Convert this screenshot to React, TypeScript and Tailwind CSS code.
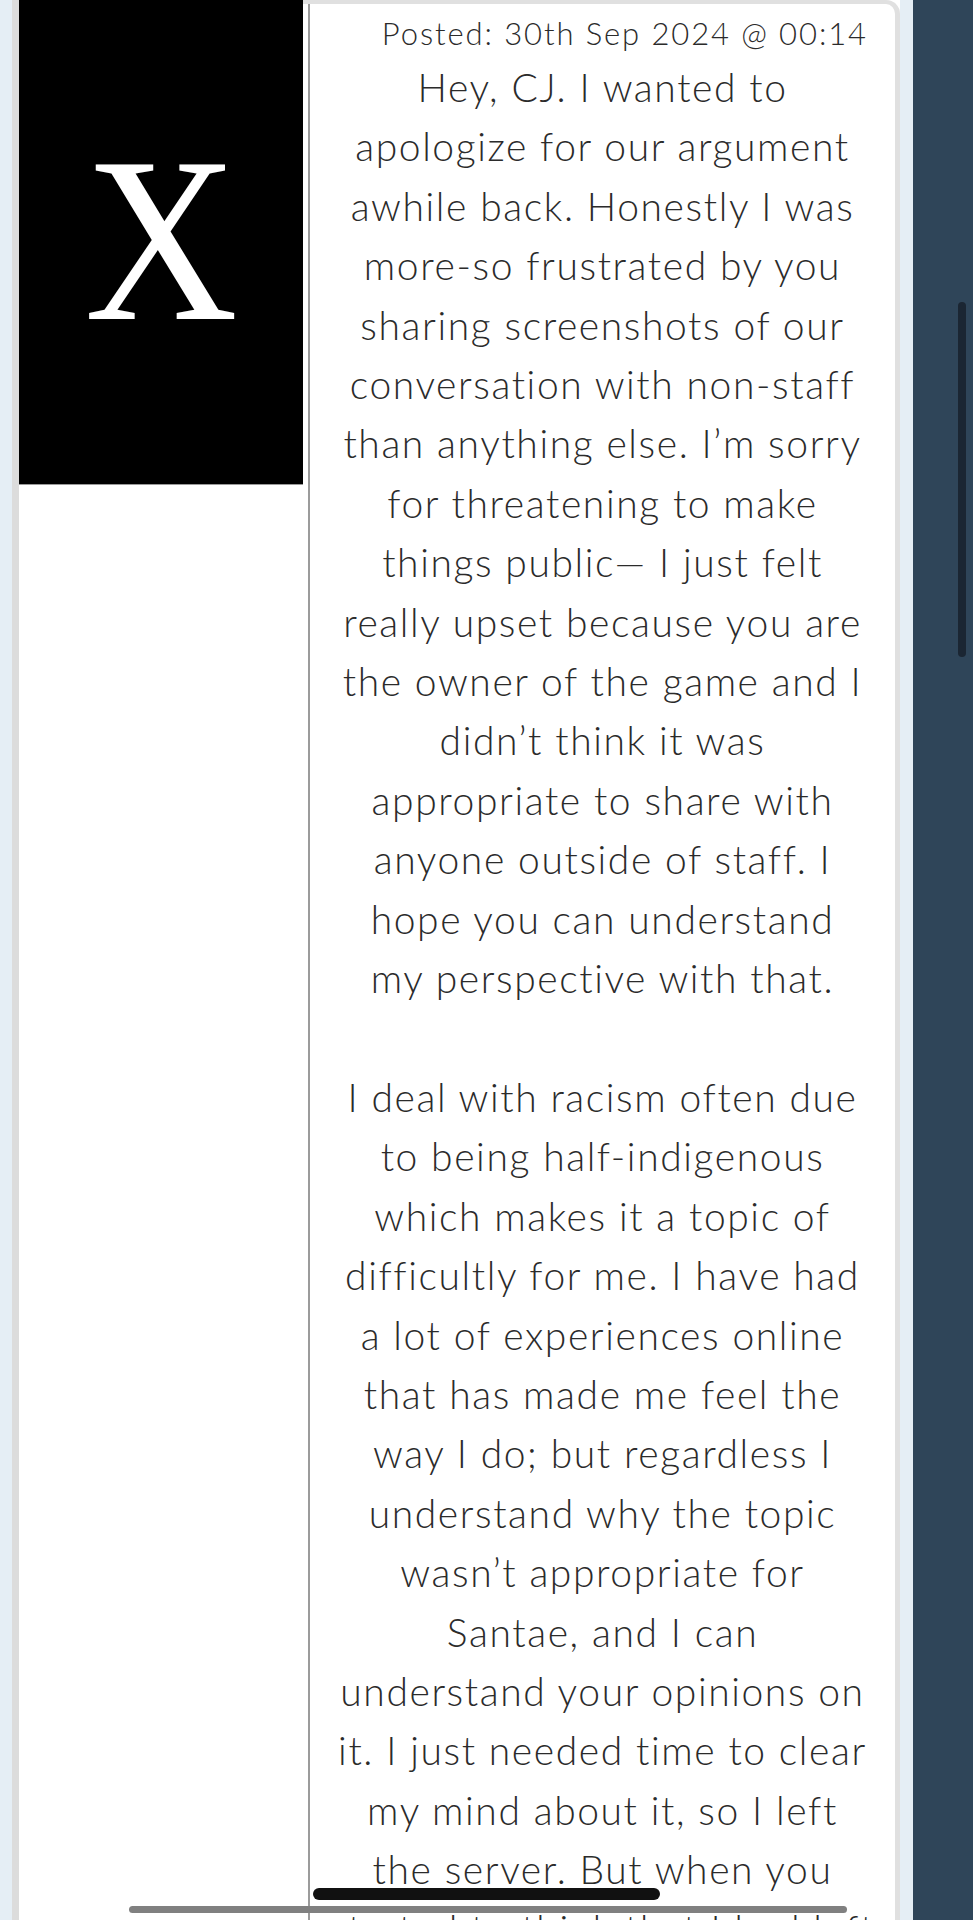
import React from "react";

const para1 = [
  "Hey, CJ. I wanted to",
  "apologize for our argument",
  "awhile back. Honestly I was",
  "more-so frustrated by you",
  "sharing screenshots of our",
  "conversation with non-staff",
  "than anything else. I\u2019m sorry",
  "for threatening to make",
  "things public\u2014 I just felt",
  "really upset because you are",
  "the owner of the game and I",
  "didn\u2019t think it was",
  "appropriate to share with",
  "anyone outside of staff. I",
  "hope you can understand",
  "my perspective with that.",
];

const para2 = [
  "I deal with racism often due",
  "to being half-indigenous",
  "which makes it a topic of",
  "difficultly for me. I have had",
  "a lot of experiences online",
  "that has made me feel the",
  "way I do; but regardless I",
  "understand why the topic",
  "wasn\u2019t appropriate for",
  "Santae, and I can",
  "understand your opinions on",
  "it. I just needed time to clear",
  "my mind about it, so I left",
  "the server. But when you",
  "started to think that I had left",
];

export default function App() {
  return (
    <div
      className="relative h-[1920px] w-[973px] overflow-hidden bg-[#e5eef5] flex"
      style={{ fontFamily: "Lato, 'Open Sans', sans-serif" }}
    >
      {/* left gutter */}
      <div className="w-[12px] shrink-0" />
      {/* card */}
      <div className="flex w-[888px] shrink-0 border-l-[7px] border-[#dcdcdc] bg-white">
        {/* left column */}
        <div className="w-[284px] shrink-0 flex flex-col">
          <div className="h-[485px] bg-black border-b border-[#9a9a9a] flex items-center justify-center">
            <span
              className="text-white text-[236px] leading-none scale-x-90 -mt-[4px]"
              style={{ fontFamily: "'Liberation Serif', 'Times New Roman', serif" }}
            >
              X
            </span>
          </div>
        </div>
        {/* right panel */}
        <div className="flex-1 flex border-t-[4px] border-r-[5px] border-[#e0e0e0] rounded-tr-[14px] pl-[5px]">
          <div className="flex-1 border-l-2 border-[#9b9b9b] text-[#2b2b2b] font-light">
            <div className="h-[54px] pt-[4px] leading-[50px] text-right pr-[27px] text-[31px] tracking-[1.9px]">
              Posted: 30th Sep 2024 @ 00:14
            </div>
            <div className="text-center text-[39px] leading-[59.4px] tracking-[1.6px]">
              {para1.map((l, i) => (
                <div key={"a" + i} className="whitespace-nowrap">{l}</div>
              ))}
              <div className="h-[59.4px]" />
              {para2.map((l, i) => (
                <div key={"b" + i} className="whitespace-nowrap">{l}</div>
              ))}
            </div>
          </div>
        </div>
      </div>
      {/* light gap */}
      <div className="w-[13px] shrink-0" />
      {/* dark sidebar */}
      <div className="relative flex-1 bg-[#2f4559]">
        <div className="absolute left-[45px] top-[302px] h-[355px] w-[8px] rounded-full bg-[#1b2633]" />
      </div>

      {/* overlays */}
      <div className="absolute left-[313px] top-[1888px] h-[12px] w-[347px] rounded-full bg-[#111111]" />
      <div className="absolute left-[129px] top-[1906px] h-[7px] w-[718px] rounded-full bg-[#808080]" />
    </div>
  );
}
